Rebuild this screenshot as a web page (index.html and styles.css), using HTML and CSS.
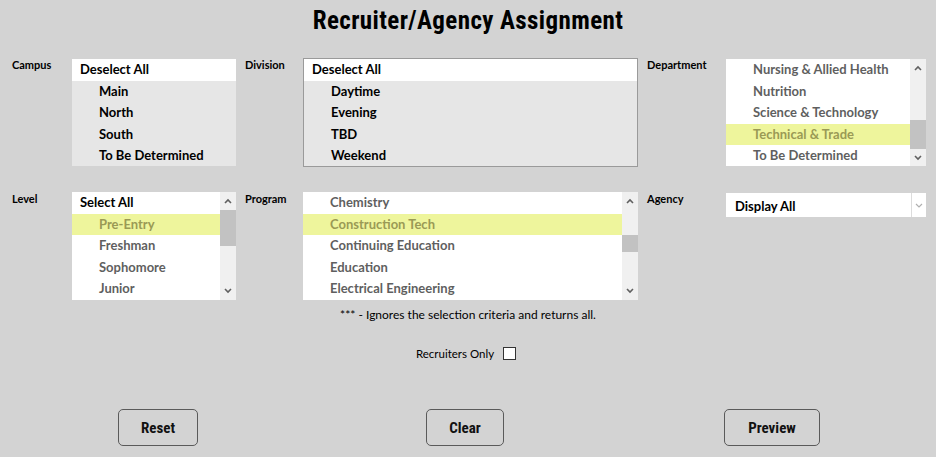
FILE: index.html
```html
<!DOCTYPE html>
<html>
<head>
<meta charset="utf-8">
<title>Recruiter/Agency Assignment</title>
<link rel="stylesheet" href="styles.css">
</head>
<body>
<h1 class="title">Recruiter/Agency Assignment</h1>
<div class="grid">
  <div class="label">Campus</div>
  <div class="list list-plain">
    <div class="body">
      <div class="row head">Deselect All</div>
      <div class="row sel">Main</div>
      <div class="row sel">North</div>
      <div class="row sel">South</div>
      <div class="row sel">To Be Determined</div>
    </div>
  </div>
  <div class="label">Division</div>
  <div class="list list-border">
    <div class="body">
      <div class="row head">Deselect All</div>
      <div class="row sel">Daytime</div>
      <div class="row sel">Evening</div>
      <div class="row sel">TBD</div>
      <div class="row sel">Weekend</div>
    </div>
  </div>
  <div class="label">Department</div>
  <div class="list list-plain white">
    <div class="body">
      <div class="row item">Nursing &amp; Allied Health</div>
      <div class="row item">Nutrition</div>
      <div class="row item">Science &amp; Technology</div>
      <div class="row item hi">Technical &amp; Trade</div>
      <div class="row item">To Be Determined</div>
    </div>
    <div class="sbar">
      <div class="arrow"><svg width="8" height="6" viewBox="0 0 8 6"><path d="M1 5 L4 2 L7 5" fill="none" stroke="#606060" stroke-width="1.6"/></svg></div>
      <div class="track"><div class="thumb" style="margin-top:44px;height:29px"></div></div>
      <div class="arrow"><svg width="8" height="6" viewBox="0 0 8 6"><path d="M1 1 L4 4 L7 1" fill="none" stroke="#606060" stroke-width="1.6"/></svg></div>
    </div>
  </div>

  <div class="label r2">Level</div>
  <div class="list list-plain white r2">
    <div class="body">
      <div class="row head">Select All</div>
      <div class="row item hi">Pre-Entry</div>
      <div class="row item">Freshman</div>
      <div class="row item">Sophomore</div>
      <div class="row item">Junior</div>
    </div>
    <div class="sbar">
      <div class="arrow"><svg width="8" height="6" viewBox="0 0 8 6"><path d="M1 5 L4 2 L7 5" fill="none" stroke="#606060" stroke-width="1.6"/></svg></div>
      <div class="track"><div class="thumb" style="margin-top:0;height:36px"></div></div>
      <div class="arrow"><svg width="8" height="6" viewBox="0 0 8 6"><path d="M1 1 L4 4 L7 1" fill="none" stroke="#606060" stroke-width="1.6"/></svg></div>
    </div>
  </div>
  <div class="label r2">Program</div>
  <div class="list list-plain white r2">
    <div class="body">
      <div class="row item">Chemistry</div>
      <div class="row item hi">Construction Tech</div>
      <div class="row item">Continuing Education</div>
      <div class="row item">Education</div>
      <div class="row item">Electrical Engineering</div>
    </div>
    <div class="sbar">
      <div class="arrow"><svg width="8" height="6" viewBox="0 0 8 6"><path d="M1 5 L4 2 L7 5" fill="none" stroke="#606060" stroke-width="1.6"/></svg></div>
      <div class="track"><div class="thumb" style="margin-top:25px;height:17px"></div></div>
      <div class="arrow"><svg width="8" height="6" viewBox="0 0 8 6"><path d="M1 1 L4 4 L7 1" fill="none" stroke="#606060" stroke-width="1.6"/></svg></div>
    </div>
  </div>
  <div class="label r2">Agency</div>
  <div class="select r2">
    <span class="select-text">Display All</span>
    <span class="select-btn"><svg width="8" height="5" viewBox="0 0 8 5"><path d="M1 1 L4 4 L7 1" fill="none" stroke="#b0b0b0" stroke-width="1.2"/></svg></span>
  </div>
</div>
<p class="note">*** - Ignores the selection criteria and returns all.</p>
<div class="check-row">
  <span>Recruiters Only</span>
  <span class="checkbox"></span>
</div>
<div class="buttons">
  <button class="btn btn-reset">Reset</button>
  <button class="btn btn-clear">Clear</button>
  <button class="btn btn-preview">Preview</button>
</div>
</body>
</html>
```
FILE: styles.css
```css
html, body {
  margin: 0;
  padding: 0;
}
body {
  background: #d3d3d3;
  width: 936px;
  height: 457px;
  overflow: hidden;
  font-family: "Lato", "DejaVu Sans", sans-serif;
  color: #000;
}
.title {
  margin: 0;
  padding-top: 7px;
  height: 28px;
  text-align: center;
  font-family: "Liberation Sans Narrow", "Roboto", sans-serif;
  font-stretch: condensed;
  font-weight: bold;
  font-size: 25px;
  letter-spacing: 0.4px;
  line-height: 28px;
  padding-left: 0;
}
.grid {
  display: grid;
  grid-template-columns: 60px 164px 67px 335px 88px 200px;
  grid-template-rows: 109px 108px;
  row-gap: 25px;
  margin-top: 23px;
  padding-left: 12px;
}
.label {
  font-size: 11px;
  font-weight: bold;
  padding-top: 1px;
  line-height: 12px;
}
.label:nth-child(3), .label:nth-child(5), .label.r2:nth-child(9), .label.r2:nth-child(11) {
  padding-left: 9px;
}
.list {
  display: flex;
  height: 108px;
  box-sizing: border-box;
  overflow: hidden;
  background: #e6e6e6;
}
.list-plain {
  margin-top: 1px;
  height: 107px;
}
.list-border {
  border: 1px solid #9a9a9a;
  height: 109px;
}
.list.white {
  background: #fff;
}
.r2.list-plain {
  margin-top: 0;
  height: 108px;
}
.body {
  flex: 1;
  display: flex;
  flex-direction: column;
}
.row {
  height: 21.5px;
  line-height: 21.5px;
  font-size: 13px;
  font-weight: bold;
  white-space: nowrap;
  padding-left: 27px;
}
.row.head {
  background: #fff;
  padding-left: 8px;
  color: #000;
}
.row.sel {
  color: #000;
}
.row.item {
  color: #5f5f5f;
}
.row.hi {
  background: #eef59c;
  color: #9a9a55;
}
.sbar {
  width: 16px;
  background: #f0f0f0;
  display: flex;
  flex-direction: column;
}
.arrow {
  height: 18px;
  display: flex;
  align-items: center;
  justify-content: center;
}
.track {
  flex: 1;
}
.thumb {
  background: #c2c2c2;
}
.select {
  height: 24px;
  margin-top: 1px;
  background: #fff;
  display: flex;
  align-items: center;
}
.select-text {
  flex: 1;
  padding-left: 9px;
  padding-top: 2px;
  font-size: 13px;
  font-weight: bold;
}
.select-btn {
  width: 14px;
  height: 24px;
  border-left: 1px solid #dcdcdc;
  display: flex;
  align-items: center;
  justify-content: center;
}
.note {
  margin: 8px 0 0;
  text-align: center;
  font-size: 12px;
  line-height: 14px;
}
.check-row {
  margin-top: 25px;
  display: flex;
  justify-content: center;
  align-items: center;
  gap: 9px;
  font-size: 11.5px;
  padding-right: 4px;
}
.checkbox {
  width: 11px;
  height: 11px;
  border: 1px solid #333;
  background: #fff;
}
.buttons {
  margin-top: 49px;
  display: flex;
  padding-left: 118px;
}
.btn {
  height: 37px;
  background: #d3d3d3;
  border: 1px solid #5a5a5a;
  border-radius: 5px;
  font-family: "Liberation Sans Narrow", "Roboto", sans-serif;
  font-stretch: condensed;
  font-size: 15px;
  font-weight: bold;
  color: #111;
  padding: 0;
}
.btn-reset { width: 80px; }
.btn-clear { width: 78px; margin-left: 228px; }
.btn-preview { width: 96px; margin-left: 220px; }
```
